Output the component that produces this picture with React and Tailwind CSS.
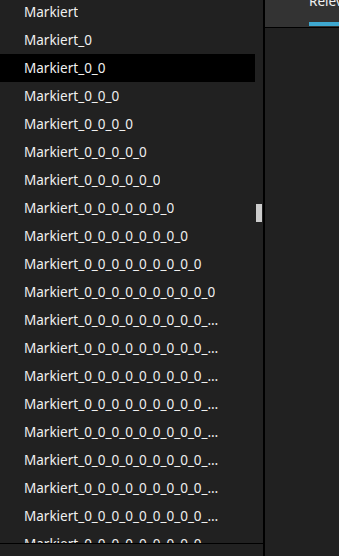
import React from 'react'

const rows = Array.from({ length: 20 }, (_, i) => 'Markiert' + '_0'.repeat(i))

const App = () => {
  return (
    <div
      className="flex h-[556px] w-[339px] overflow-hidden bg-[#212121] text-[13.5px] text-[#f0f0f0]"
      style={{ fontFamily: '"Noto Sans", "Open Sans", sans-serif' }}
    >
      {/* Left list */}
      <div className="flex w-[263px] shrink-0 flex-col">
        <div className="relative h-[543px] overflow-hidden">
          <div className="-mt-[2px] pr-2">
            {rows.map((label, i) => (
              <div
                key={i}
                className={`flex h-7 items-center pl-6 ${i === 2 ? 'bg-black' : ''}`}
              >
                <span className="block max-w-[196px] truncate">{label}</span>
              </div>
            ))}
          </div>
          <div className="absolute left-[256px] top-[204px] h-[18px] w-[6px] bg-[#cccccc]" />
        </div>
        <div className="h-px bg-black" />
        <div className="flex-1" />
      </div>

      <div className="w-[2px] shrink-0 bg-black" />

      {/* Right panel */}
      <div className="flex flex-1 flex-col">
        <div className="relative h-[28px] border-b border-black bg-[#333333]">
          <div className="absolute left-[44px] top-[-9px] whitespace-nowrap">Relevanz</div>
          <div className="absolute left-[44px] top-[22px] h-[4px] w-[60px] bg-[#3ea8d0]" />
        </div>
        <div className="flex-1" />
      </div>
    </div>
  )
}

export default App
